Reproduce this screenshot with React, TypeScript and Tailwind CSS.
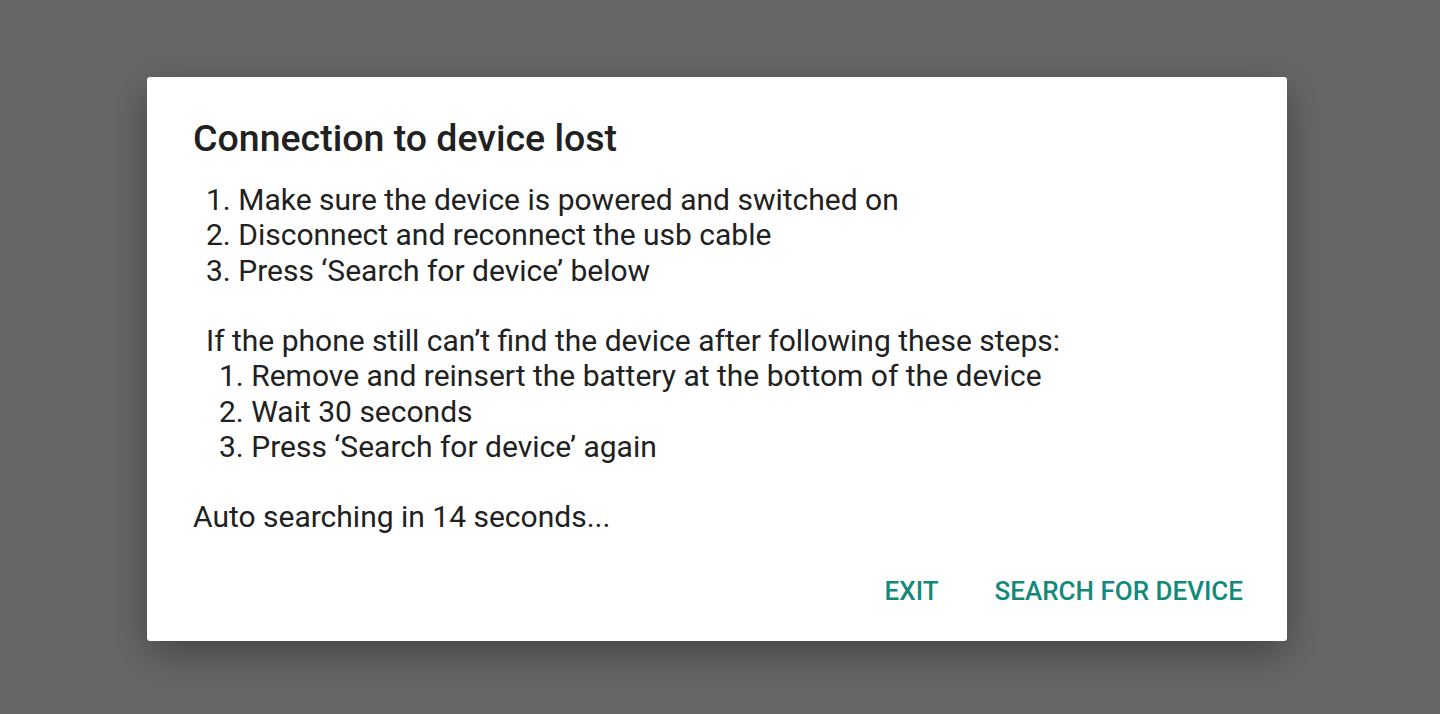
export default function App() {
  return (
    <div className="w-[1440px] h-[714px] bg-[#676767] flex items-start pl-[147px] pt-[77px] font-['Roboto',sans-serif]">
      <div className="w-[1140px] h-[564px] bg-white rounded-[3px] shadow-[0_12px_40px_rgba(0,0,0,0.35)] flex flex-col">
        <div className="pl-[46px] pr-[46px] pt-[40px]">
          <h2 className="text-[37.5px] leading-[42px] font-medium text-[#212121]">
            Connection to device lost
          </h2>
          <div className="mt-[23px] text-[30px] leading-[35.25px] text-[#212121]">
            <div className="pl-[13px]">
              <p>1. Make sure the device is powered and switched on</p>
              <p>2. Disconnect and reconnect the usb cable</p>
              <p>3. Press ‘Search for device’ below</p>
            </div>
            <p className="pl-[13px] mt-[35.25px]">If the phone still can’t find the device after following these steps:</p>
            <div className="pl-[26px]">
              <p>1. Remove and reinsert the battery at the bottom of the device</p>
              <p>2. Wait 30 seconds</p>
              <p>3. Press ‘Search for device’ again</p>
            </div>
            <p className="mt-[35.25px]">Auto searching in 14 seconds...</p>
          </div>
        </div>
        <div className="mt-auto flex justify-end items-center gap-[24px] pr-[28px] pb-[33px]">
          <button className="px-[16px] h-[36px] text-[26px] font-medium text-[#13897a] uppercase">
            Exit
          </button>
          <button className="px-[16px] h-[36px] text-[26px] font-medium text-[#13897a] uppercase">
            Search for device
          </button>
        </div>
      </div>
    </div>
  );
}
